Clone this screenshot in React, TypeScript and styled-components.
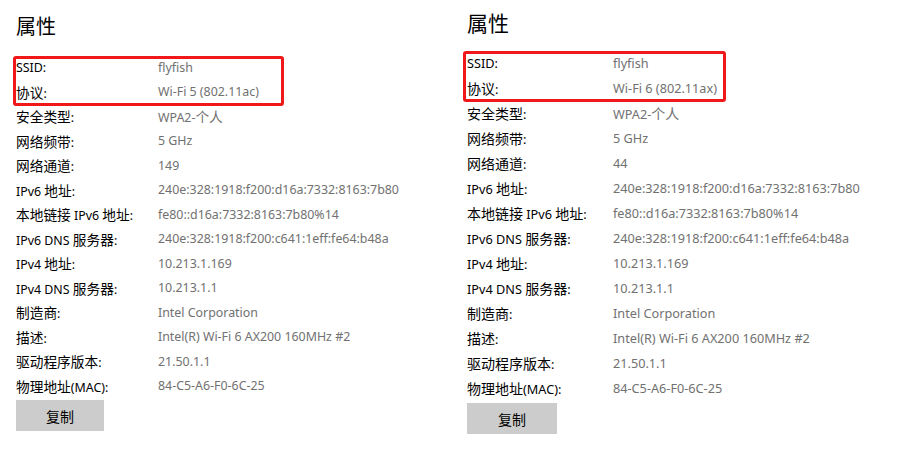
import React from "react";
import styled, { createGlobalStyle } from "styled-components";

const Global = createGlobalStyle`
  html, body { margin: 0; padding: 0; background: #ffffff; }
  body { font-family: "Noto Sans", "Noto Sans CJK SC", sans-serif; }
`;

const Page = styled.div`
  width: 918px;
  height: 453px;
  display: grid;
  grid-template-columns: 451px 1fr;
  background: #fff;
  overflow: hidden;
`;

type Scale = { $fs: number; $cjk: number; $top: number };

const Panel = styled.section<Scale>`
  padding: ${(p) => p.$top}px 0 0 16px;
  font-size: ${(p) => p.$fs}px;
  font-family: "Noto Sans", "Noto Sans CJK SC", sans-serif;
  --cjk-size: ${(p) => p.$cjk}px;
`;

const Title = styled.h2<{ $size: number; $gap: number }>`
  margin: 0 0 ${(p) => p.$gap}px 0;
  font-family: "Noto Sans CJK SC", sans-serif;
  font-weight: 400;
  font-size: ${(p) => p.$size}px;
  line-height: 28px;
  color: #000;
`;

const Highlight = styled.div<{ $w: number; $top: number; $left: number; $bottom: number }>`
  position: relative;
  &::after {
    content: "";
    position: absolute;
    top: ${(p) => p.$top}px;
    bottom: ${(p) => p.$bottom}px;
    left: ${(p) => p.$left}px;
    width: ${(p) => p.$w}px;
    border: 3px solid #f01818;
    border-radius: 3px;
    box-sizing: border-box;
    pointer-events: none;
  }
`;

const Row = styled.div<{ $h: number; $col: number }>`
  display: grid;
  grid-template-columns: ${(p) => p.$col}px auto;
  height: ${(p) => p.$h}px;
  align-items: center;
  white-space: nowrap;
`;

const Label = styled.span`
  color: #000;
`;

const Value = styled.span`
  color: #717171;
`;

const Cjk = styled.span`
  font-family: "Noto Sans CJK SC", sans-serif;
  font-size: var(--cjk-size);
`;

const CopyButton = styled.button<{ $w: number; $mt: number }>`
  display: block;
  margin-top: ${(p) => p.$mt}px;
  width: ${(p) => p.$w}px;
  height: 31px;
  border: none;
  background: #cccccc;
  color: #000;
  font-family: "Noto Sans CJK SC", sans-serif;
  font-size: 14px;
  padding: 0;
`;

const Mixed = ({ text }: { text: string }) => {
  const parts = text.split(/([\u3400-\u9fff]+)/).filter(Boolean);
  return (
    <>
      {parts.map((p, i) =>
        /[\u3400-\u9fff]/.test(p) ? <Cjk key={i}>{p}</Cjk> : <React.Fragment key={i}>{p}</React.Fragment>
      )}
    </>
  );
};

type Item = [string, string];

const rest = (channel: string): Item[] => [
  ["安全类型:", "WPA2-个人"],
  ["网络频带:", "5 GHz"],
  ["网络通道:", channel],
  ["IPv6 地址:", "240e:328:1918:f200:d16a:7332:8163:7b80"],
  ["本地链接 IPv6 地址:", "fe80::d16a:7332:8163:7b80%14"],
  ["IPv6 DNS 服务器:", "240e:328:1918:f200:c641:1eff:fe64:b48a"],
  ["IPv4 地址:", "10.213.1.169"],
  ["IPv4 DNS 服务器:", "10.213.1.1"],
  ["制造商:", "Intel Corporation"],
  ["描述:", "Intel(R) Wi-Fi 6 AX200 160MHz #2"],
  ["驱动程序版本:", "21.50.1.1"],
  ["物理地址(MAC):", "84-C5-A6-F0-6C-25"],
];

type Config = {
  protocol: string;
  channel: string;
  fs: number;
  cjk: number;
  row: number;
  top: number;
  col: number;
  titleSize: number;
  titleGap: number;
  box: { w: number; top: number; left: number; bottom: number };
  btnW: number;
  btnMt: number;
};

const Properties = ({ c }: { c: Config }) => (
  <Panel $fs={c.fs} $cjk={c.cjk} $top={c.top}>
    <Title $size={c.titleSize} $gap={c.titleGap}>属性</Title>
    <Highlight $w={c.box.w} $top={c.box.top} $left={c.box.left} $bottom={c.box.bottom}>
      <Row $h={c.row} $col={c.col}>
        <Label>SSID:</Label>
        <Value>flyfish</Value>
      </Row>
      <Row $h={c.row} $col={c.col}>
        <Label><Mixed text="协议:" /></Label>
        <Value>{c.protocol}</Value>
      </Row>
    </Highlight>
    {rest(c.channel).map(([k, v]) => (
      <Row key={k} $h={c.row} $col={c.col}>
        <Label><Mixed text={k} /></Label>
        <Value><Mixed text={v} /></Value>
      </Row>
    ))}
    <CopyButton $w={c.btnW} $mt={c.btnMt}>复制</CopyButton>
  </Panel>
);

const left: Config = {
  protocol: "Wi-Fi 5 (802.11ac)",
  channel: "149",
  fs: 12.4,
  cjk: 13.7,
  row: 24.5,
  top: 12,
  col: 142,
  titleSize: 20,
  titleGap: 15,
  box: { w: 271, top: 1, left: -3, bottom: -2 },
  btnW: 88,
  btnMt: 2,
};

const right: Config = {
  protocol: "Wi-Fi 6 (802.11ax)",
  channel: "44",
  fs: 12.7,
  cjk: 14,
  row: 25,
  top: 8,
  col: 146,
  titleSize: 21,
  titleGap: 14,
  box: { w: 263, top: 1, left: -4, bottom: -2 },
  btnW: 90,
  btnMt: 3,
};

export default function App() {
  return (
    <>
      <Global />
      <Page>
        <Properties c={left} />
        <Properties c={right} />
      </Page>
    </>
  );
}
